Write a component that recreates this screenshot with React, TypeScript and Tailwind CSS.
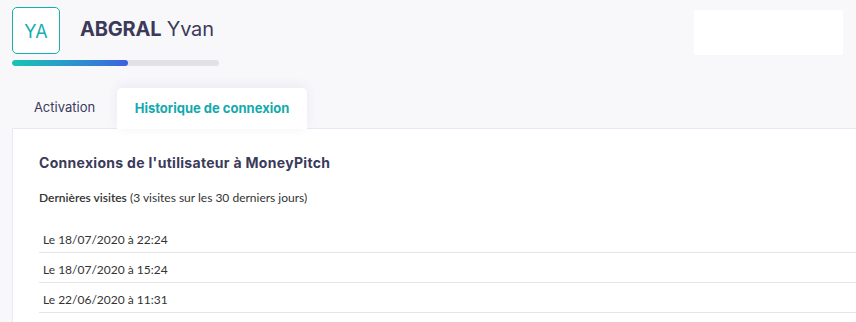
const visits = ['Le 18/07/2020 à 22:24', 'Le 18/07/2020 à 15:24', 'Le 22/06/2020 à 11:31']

export default function App() {
  return (
    <div className="w-[856px] h-[322px] overflow-hidden bg-[#f8f8fb] font-['Inter',sans-serif]">
      {/* Header */}
      <div className="flex justify-between pl-3 pr-[13px] pt-[7px]">
        <div className="w-[207px]">
          <div className="flex items-center">
            <div className="w-12 h-[47px] pt-[2px] rounded-[5px] border border-[#17aeb0] bg-white flex items-center justify-center text-[18px] text-[#17aeb0]">
              YA
            </div>
            <div className="ml-5 -mt-1 text-[20px] text-[#3b3a5a] tracking-[-0.2px]">
              <span className="font-bold">ABGRAL</span> <span>Yvan</span>
            </div>
          </div>
          <div className="mt-[6px] h-[6px] rounded-full bg-[#e2e2e6] overflow-hidden">
            <div className="h-full w-[116px] rounded-full bg-gradient-to-r from-[#17c4b0] to-[#3d5fe0]" />
          </div>
        </div>
        <div className="mt-[3px] w-[149px] h-[45px] bg-white rounded-[2px]" />
      </div>

      {/* Tabs */}
      <div className="flex items-end pl-3 mt-[22px] h-[40px]">
        <div className="w-[105px] h-[40px] flex items-center justify-center text-[13px] text-[#3b3a5a]">
          Activation
        </div>
        <div className="relative z-10 w-[190px] h-[41px] -mb-px bg-white rounded-t-[5px] shadow-[0_-2px_12px_rgba(60,50,120,0.08)] flex items-center justify-center text-[13px] font-bold text-[#14a9ad]">
          Historique de connexion
        </div>
      </div>

      {/* Panel */}
      <div className="ml-3 bg-white border-l border-t border-[#e5e9f4] h-[200px] pl-[26px] pt-[24px]">
        <h2 className="text-[14px] font-bold text-[#3b3a5a] leading-5 tracking-[0.3px]">
          Connexions de l'utilisateur à MoneyPitch
        </h2>
        <p className="mt-[17px] text-[12px] text-[#333] font-['Lato',sans-serif] leading-4">
          <span className="font-semibold">Dernières visites</span> (3 visites sur les 30 derniers jours)
        </p>
        <div className="mt-[17px] font-['Lato',sans-serif] text-[12px] text-[#333]">
          {visits.map((v) => (
            <div key={v} className="h-[30px] border-b border-[#e6e6e6] pt-[9px] pl-1 leading-4">
              {v}
            </div>
          ))}
        </div>
      </div>
    </div>
  )
}
